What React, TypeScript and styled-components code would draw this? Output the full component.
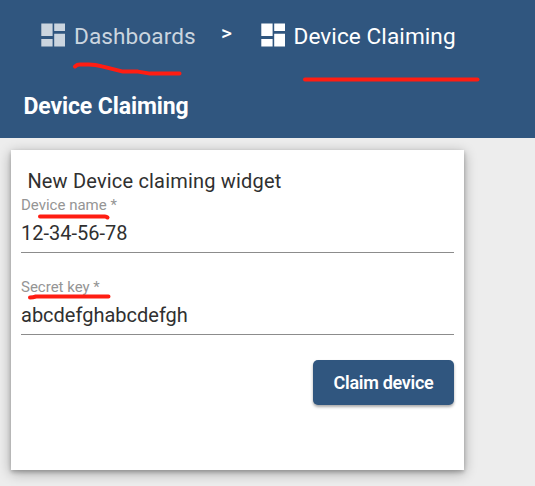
import React from "react";
import styled, { createGlobalStyle } from "styled-components";

const GlobalStyle = createGlobalStyle`
  * { box-sizing: border-box; }
  body {
    margin: 0;
    overflow: hidden;
    background: #ededed;
    font-family: Roboto, "Liberation Sans", sans-serif;
  }
`;

const Page = styled.div`
  position: relative;
  width: 535px;
  height: 486px;
  background: #ededed;
`;

const Header = styled.header`
  height: 138px;
  padding: 20px 0 0 23px;
  background: #30567f;
  color: #fff;
`;

const Breadcrumbs = styled.nav`
  display: flex;
  align-items: flex-start;
  height: 74px;
  padding-left: 18px;
`;

const Crumb = styled.div<{ $active?: boolean }>`
  display: flex;
  gap: ${(p) => (p.$active ? 8.5 : 9)}px;
  width: ${(p) => (p.$active ? 220 : 180)}px;
  color: ${(p) => (p.$active ? "#fff" : "#cbd5df")};
`;

const DashboardIcon = styled.svg`
  flex: none;
  width: 24px;
  height: 24px;
  margin-top: 3px;
  fill: currentColor;
`;

const CrumbText = styled.span`
  font-size: 22.6px;
  line-height: 34px;
  letter-spacing: 0.08px;
  white-space: nowrap;
`;

const Separator = styled.span`
  width: 40px;
  font-size: 21px;
  font-weight: 500;
  line-height: 27px;
`;

const Title = styled.h1`
  margin: 0 0 0 0.4px;
  font-size: 23px;
  font-weight: 700;
  line-height: 26px;
  letter-spacing: -0.1px;
  white-space: nowrap;
`;

const Card = styled.main`
  width: 453px;
  height: 320px;
  margin: 12px 0 0 11px;
  padding: 19px 10px 0;
  background: #fff;
  box-shadow: 0 3px 12px rgba(0, 0, 0, 0.32), 0 2px 4px rgba(0, 0, 0, 0.22);
`;

const CardTitle = styled.h2`
  margin: 0 0 0 6.4px;
  font-size: 20px;
  font-weight: 400;
  line-height: 24px;
  letter-spacing: 0.18px;
  color: #303030;
  white-space: nowrap;
`;

const Field = styled.label`
  display: block;
  height: 60px;
  margin-bottom: 22px;
  border-bottom: 1px solid #8c8c8c;
`;

const FieldName = styled.span`
  display: block;
  height: 24px;
  font-size: 15px;
  line-height: 24px;
  color: #959595;
`;

const FieldValue = styled.span`
  display: block;
  font-size: 20px;
  line-height: 32px;
  color: #303030;
`;

const Actions = styled.div`
  display: flex;
  justify-content: flex-end;
  padding-top: 3px;
`;

const ClaimButton = styled.button`
  width: 141px;
  height: 45px;
  padding: 0;
  border: 0;
  border-radius: 5px;
  background: #30567f;
  color: #fff;
  font: 600 18px/45px Roboto, sans-serif;
  letter-spacing: -0.3px;
  white-space: nowrap;
  box-shadow: 0 2px 3px rgba(0, 0, 0, 0.34);
`;

const Markings = styled.svg`
  position: absolute;
  inset: 0;
  width: 535px;
  height: 486px;
  pointer-events: none;
  fill: none;
  stroke: #ff1d12;
  stroke-width: 4;
  stroke-linecap: round;
  stroke-linejoin: round;
`;

const Dashboard = () => (
  <DashboardIcon viewBox="0 0 24 24" aria-hidden="true">
    <path d="M.3.4h11.3v12.6H.3zM.3 15.9h11.3v7.7H.3zM13.2.4h11v7.7h-11zM13.2 10.8h11v12.8h-11z" />
  </DashboardIcon>
);

const fields = [
  { name: "Device name *", value: "12-34-56-78" },
  { name: "Secret key *", value: "abcdefghabcdefgh" },
];

export default function App() {
  return (
    <Page>
      <GlobalStyle />
      <Header>
        <Breadcrumbs>
          <Crumb>
            <Dashboard />
            <CrumbText>Dashboards</CrumbText>
          </Crumb>
          <Separator>&gt;</Separator>
          <Crumb $active>
            <Dashboard />
            <CrumbText>Device Claiming</CrumbText>
          </Crumb>
        </Breadcrumbs>
        <Title>Device Claiming</Title>
      </Header>
      <Card>
        <CardTitle>New Device claiming widget</CardTitle>
        {fields.map((field) => (
          <Field key={field.name}>
            <FieldName>{field.name}</FieldName>
            <FieldValue>{field.value}</FieldValue>
          </Field>
        ))}
        <Actions>
          <ClaimButton>Claim device</ClaimButton>
        </Actions>
      </Card>
      <Markings aria-hidden="true">
        <path d="M75 66.5Q77 64.6 80 64.6H88Q95 64.5 102 66.4L123 71.6H138L150 73.6H179.5" />
        <path d="M305 79.5H477.5" />
        <path d="M40 216.5H105Q106.5 216.5 107.5 217.5" />
        <path d="M30 297.5Q33 297.5 36 296.5H108.5" />
      </Markings>
    </Page>
  );
}
